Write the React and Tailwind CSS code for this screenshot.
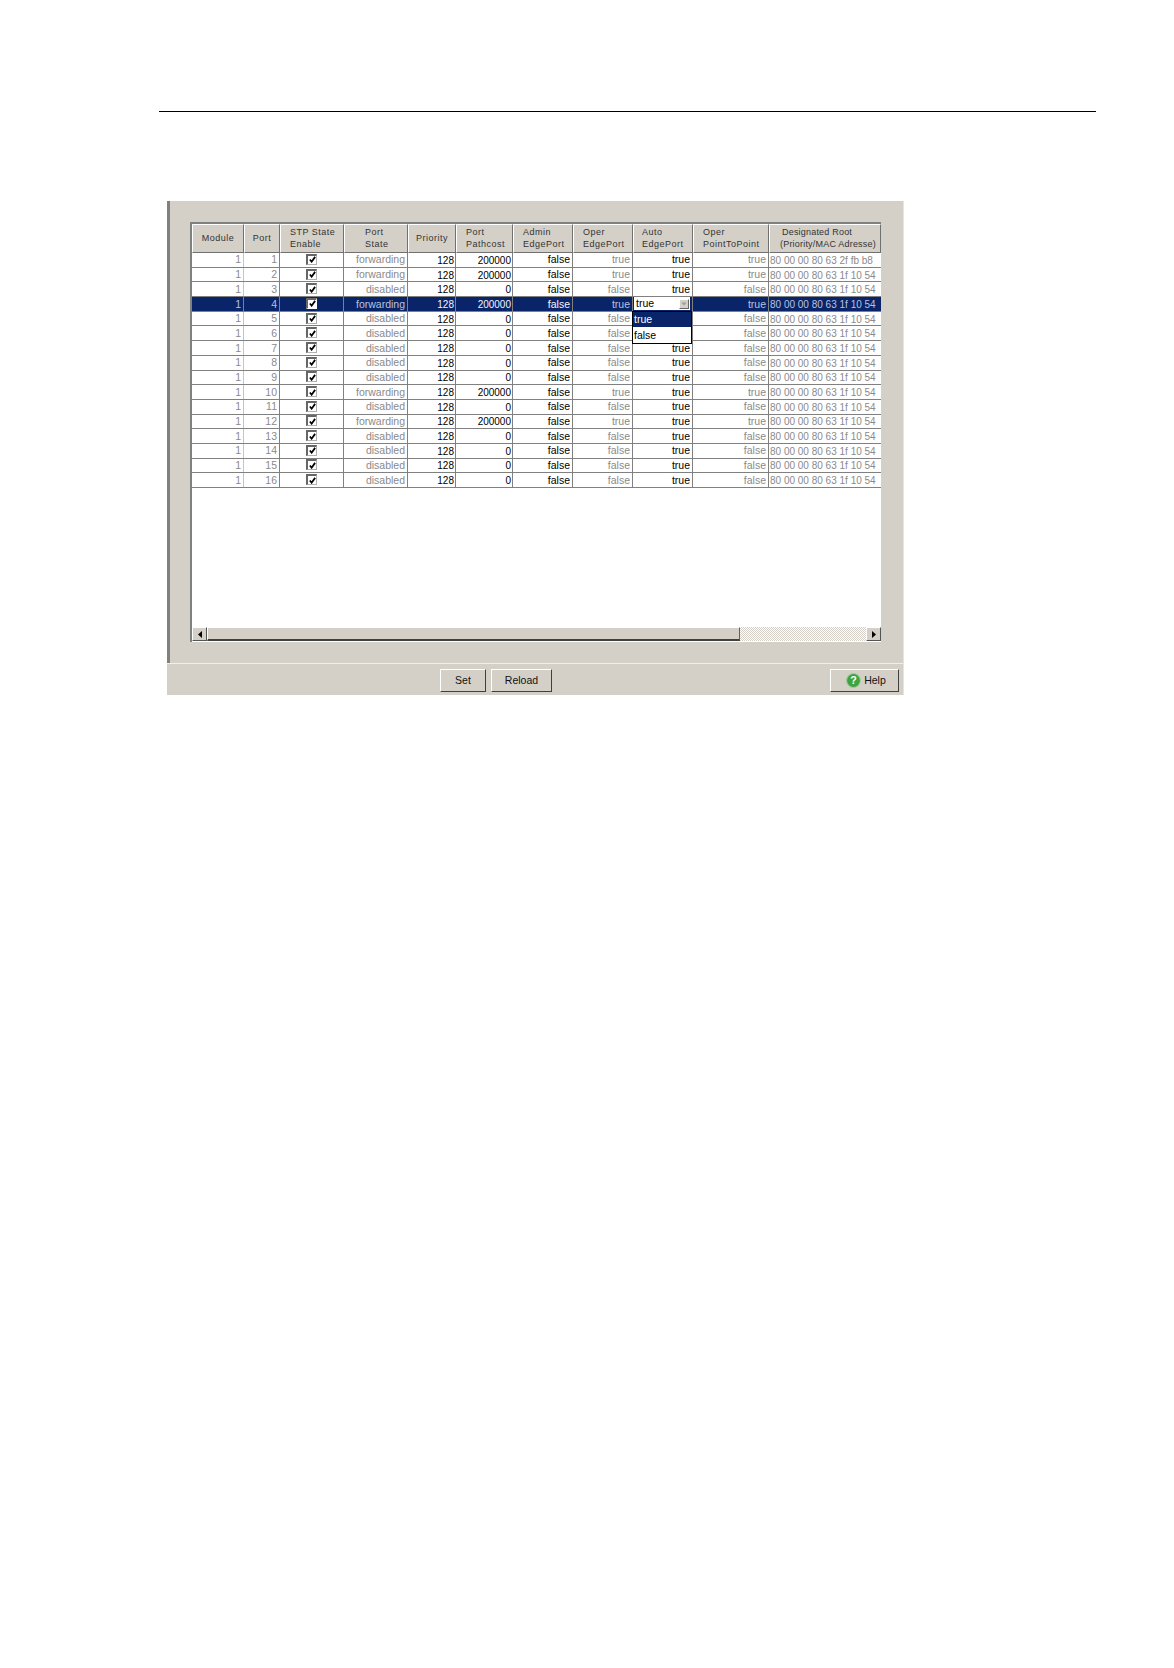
import React from 'react'

const cols = 'grid grid-cols-[52px_36px_64px_64px_48px_57px_60px_60px_60px_76px_112px]'

const fwd = [1, 2, 4, 10, 12]
const rows = Array.from({ length: 16 }, (_, i) => {
  const port = i + 1
  const up = fwd.includes(port)
  return {
    port,
    up,
    mac: port === 1 ? '80 00 00 80 63 2f fb b8' : '80 00 00 80 63 1f 10 54',
  }
})

const headers = [
  { a: 'Module', center: true },
  { a: 'Port', center: true },
  { a: 'STP State', b: 'Enable', pad: 'pl-[9px]' },
  { a: 'Port', b: 'State', pad: 'pl-[20px]' },
  { a: 'Priority', center: true },
  { a: 'Port', b: 'Pathcost', pad: 'pl-[9px]' },
  { a: 'Admin', b: 'EdgePort', pad: 'pl-[9px]' },
  { a: 'Oper', b: 'EdgePort', pad: 'pl-[9px]' },
  { a: 'Auto', b: 'EdgePort', pad: 'pl-[8px]' },
  { a: 'Oper', b: 'PointToPoint', pad: 'pl-[9px]' },
  { a: 'Designated Root', b: '(Priority/MAC Adresse)', pad: 'pl-[10px] tracking-[0.2px]', indent: 'ml-[2px]' },
]

const Check = ({ selected }) => (
  <div className={`w-[11px] h-[11px] mt-[-1px] bg-white border-t-2 border-l-2 border-t-[#666] border-l-[#666] border-r border-b ${selected ? 'border-r-white border-b-white' : 'border-r-[#b0b0b0] border-b-[#b0b0b0]'} flex items-center justify-center`}>
    <svg width="7" height="7" viewBox="0 0 8 8">
      <path d="M1 4 L3 6.5 L7 1" fill="none" stroke="#000" strokeWidth="2" />
    </svg>
  </div>
)

const Cell = ({ children, grey, selected, left, last, light, num }) => {
  let color = grey ? 'text-[#8a8a8a]' : 'text-black'
  if (selected) color = grey ? 'text-[#b9c2dc]' : 'text-[#f2f4fa]'
  const line = light && !selected ? 'border-r-[#c4c4c4]' : 'border-r-[#808080]'
  return (
    <div className={`h-full flex items-center pt-[1px] overflow-hidden whitespace-nowrap ${num ? 'text-[10px]' : ''} ${left ? 'justify-start pl-[1px]' : num ? 'justify-end pr-[1px]' : 'justify-end pr-[2px]'} ${last ? '' : `border-r ${line}`} ${color}`}>
      {children}
    </div>
  )
}

const Row = ({ r }) => {
  const sel = r.port === 4
  return (
    <div className={`${cols} h-[14.7px] border-b border-b-[#808080] ${sel ? 'bg-[#0a246a]' : 'bg-white'}`}>
      <Cell grey selected={sel} light>1</Cell>
      <Cell grey selected={sel}>{r.port}</Cell>
      <div className="h-full flex items-center justify-center border-r border-r-[#808080]">
        <Check selected={sel} />
      </div>
      <Cell grey selected={sel}>{r.up ? 'forwarding' : 'disabled'}</Cell>
      <Cell selected={sel} num>128</Cell>
      <Cell selected={sel} num>{r.up ? '200000' : '0'}</Cell>
      <Cell selected={sel}>false</Cell>
      <Cell grey selected={sel}>{r.up ? 'true' : 'false'}</Cell>
      {sel ? (
        <div className="h-full flex items-center pl-[1px] pr-[2px] border-r border-r-[#808080]">
          <div className="w-full h-[13px] bg-white flex items-center justify-between pl-[2px] pr-[1px] text-black">
            <span>true</span>
            <span className="w-[10px] h-[10px] bg-[#d4d0c8] border border-t-white border-l-white border-r-[#666] border-b-[#666] flex items-center justify-center">
              <svg width="6" height="4" viewBox="0 0 6 4"><path d="M0.5 0.5 H5.5 L3 3.5 Z" fill="#999" /></svg>
            </span>
          </div>
        </div>
      ) : (
        <Cell selected={sel}>true</Cell>
      )}
      <Cell grey selected={sel}>{r.up ? 'true' : 'false'}</Cell>
      <Cell grey selected={sel} left last><span className="text-[10px]">{r.mac}</span></Cell>
    </div>
  )
}

const Button = ({ className, children }) => (
  <button className={`h-[23px] flex items-center justify-center gap-[3px] bg-[#d4d0c8] border border-t-white border-l-white border-r-[#404040] border-b-[#404040] text-[10.5px] text-[#111] ${className}`}>
    {children}
  </button>
)

const App = () => {
  return (
    <div className="min-h-[1668px] bg-white pt-[111px] font-['Liberation_Sans',Arial,sans-serif]">
      <div className="ml-[159px] w-[937px] h-px bg-black" />

      <div className="ml-[167px] mt-[89px] w-[737px] bg-[#d4d0c8] border-r border-r-[#e6e4de]">
        {/* main area */}
        <div className="h-[462px] border-l-[3px] border-l-[#808080] pl-[20px] pt-[21px]">
          <div className="relative w-[691px] h-[420px] border-t-2 border-l-2 border-t-[#808080] border-l-[#808080] flex flex-col bg-white text-[10.5px]">
            {/* header */}
            <div className={`${cols} h-[29px] bg-[#d4d0c8] text-[9px] tracking-[0.5px] leading-[12.5px] text-[#333]`}>
              {headers.map((h, i) => (
                <div
                  key={i}
                  className={`flex flex-col justify-center pb-[1px] whitespace-nowrap overflow-hidden border-t border-l border-t-white border-l-white border-r border-b border-r-[#707070] border-b-[#707070] ${h.center ? 'items-center' : `items-start ${h.pad}`}`}
                >
                  <span className={h.indent}>{h.a}</span>
                  {h.b && <span>{h.b}</span>}
                </div>
              ))}
            </div>

            {rows.map((r) => (
              <Row key={r.port} r={r} />
            ))}

            <div className="flex-1" />

            {/* horizontal scrollbar */}
            <div className="h-[14px] flex bg-[#d4d0c8]">
              <div className="w-[15px] flex items-center justify-center border border-t-white border-l-white border-r-[#555] border-b-[#555]">
                <svg width="4" height="7" viewBox="0 0 4 7"><path d="M4 0 V7 L0 3.5 Z" fill="#000" /></svg>
              </div>
              <div className="w-[533px] border border-t-white border-l-white border-r-[#606060] border-b-[#404040] border-b-2" />
              <div className="flex-1 bg-[repeating-conic-gradient(#d4d0c8_0_25%,#fff_0_50%)] bg-[length:2px_2px]" />
              <div className="w-[15px] flex items-center justify-center border border-t-white border-l-white border-r-[#555] border-b-[#555]">
                <svg width="4" height="7" viewBox="0 0 4 7"><path d="M0 0 V7 L4 3.5 Z" fill="#000" /></svg>
              </div>
            </div>
            <div className="h-px bg-white" />

            {/* open combo list */}
            <div className="absolute left-[440px] top-[87px] w-[60px] h-[33px] bg-white border border-black flex flex-col text-[10.5px]">
              <div className="h-[15px] bg-[#0a246a] text-white pl-[1px] pt-[1px] flex items-center">true</div>
              <div className="flex-1 text-black pl-[1px] pt-[1px] flex items-center">false</div>
            </div>
          </div>
        </div>

        {/* button bar */}
        <div className="h-[32px] border-t border-t-[#f0efeb] flex items-start pt-[5px] pl-[273px] pr-[4px]">
          <Button className="w-[46px]">Set</Button>
          <Button className="w-[61px] ml-[5px]">Reload</Button>
          <Button className="w-[69px] ml-auto pl-[3px]">
            <svg width="15" height="15" viewBox="0 0 14 14">
              <circle cx="7" cy="7" r="6.5" fill="#3fa33f" stroke="#9ccf9c" />
              <text x="7" y="10.5" textAnchor="middle" fontSize="10" fontWeight="700" fill="#fff" fontFamily="Liberation Sans">?</text>
            </svg>
            <span>Help</span>
          </Button>
        </div>
      </div>
    </div>
  )
}

export default App
